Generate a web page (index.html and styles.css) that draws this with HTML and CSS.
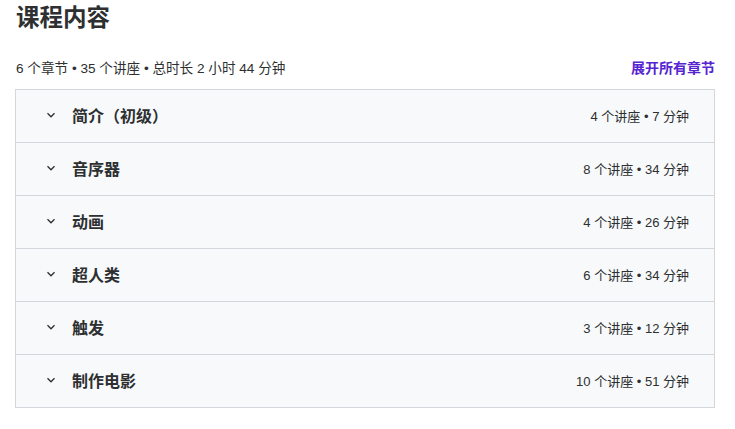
FILE: index.html
```html
<!DOCTYPE html>
<html lang="zh-CN">

<head>
  <meta charset="UTF-8">
  <meta name="viewport" content="width=device-width, initial-scale=1.0">
  <title>课程内容</title>
  <link rel="stylesheet" href="styles.css">
</head>

<body>
  <div class="curriculum">
    <h2>课程内容</h2>
    <div class="summary">
      <span>6 个章节 • 35 个讲座 • 总时长 2 小时 44 分钟</span>
      <a href="#" class="expand-all">展开所有章节</a>
    </div>
    <div class="sections">
      <div class="section">
        <svg class="chevron" viewBox="0 0 24 24"><path d="M6 9l6 6 6-6"/></svg>
        <span class="section-title">简介（初级）</span>
        <span class="section-meta">4 个讲座 • 7 分钟</span>
      </div>
      <div class="section">
        <svg class="chevron" viewBox="0 0 24 24"><path d="M6 9l6 6 6-6"/></svg>
        <span class="section-title">音序器</span>
        <span class="section-meta">8 个讲座 • 34 分钟</span>
      </div>
      <div class="section">
        <svg class="chevron" viewBox="0 0 24 24"><path d="M6 9l6 6 6-6"/></svg>
        <span class="section-title">动画</span>
        <span class="section-meta">4 个讲座 • 26 分钟</span>
      </div>
      <div class="section">
        <svg class="chevron" viewBox="0 0 24 24"><path d="M6 9l6 6 6-6"/></svg>
        <span class="section-title">超人类</span>
        <span class="section-meta">6 个讲座 • 34 分钟</span>
      </div>
      <div class="section">
        <svg class="chevron" viewBox="0 0 24 24"><path d="M6 9l6 6 6-6"/></svg>
        <span class="section-title">触发</span>
        <span class="section-meta">3 个讲座 • 12 分钟</span>
      </div>
      <div class="section">
        <svg class="chevron" viewBox="0 0 24 24"><path d="M6 9l6 6 6-6"/></svg>
        <span class="section-title">制作电影</span>
        <span class="section-meta">10 个讲座 • 51 分钟</span>
      </div>
    </div>
  </div>
</body>

</html>
```

FILE: styles.css
```css
body {
  margin: 0;
  padding: 0;
  background: #fff;
  color: #2d2f31;
  font-family: "Liberation Sans", "Noto Sans CJK SC", sans-serif;
}

.curriculum {
  width: 700px;
  margin-left: 15px;
}

h2 {
  margin: 0;
  padding: 2px 0 0 1px;
  font-size: 23.5px;
  line-height: 32px;
  font-weight: bold;
  color: #2d2f31;
}

.summary {
  display: flex;
  justify-content: space-between;
  align-items: center;
  margin-top: 21px;
  padding: 0 0 0 1px;
  height: 24px;
  font-size: 13.6px;
  margin-bottom: 10px;
}

.expand-all {
  color: #5624d0;
  font-weight: bold;
  text-decoration: none;
  font-size: 14px;
}

.sections {
  border: 1px solid #d1d7dc;
  border-top: none;
}

.section {
  display: flex;
  align-items: center;
  height: 50px;
  border-top: 1px solid #d1d7dc;
  background: #f7f9fa;
  padding: 0 25px 2px 28px;
}

.chevron {
  width: 14px;
  height: 14px;
  fill: none;
  stroke: #2d2f31;
  stroke-width: 2.2;
  margin-right: 14px;
}

.section-title {
  flex: 1;
  font-size: 16px;
  font-weight: bold;
}

.section-meta {
  font-size: 13px;
}
```
